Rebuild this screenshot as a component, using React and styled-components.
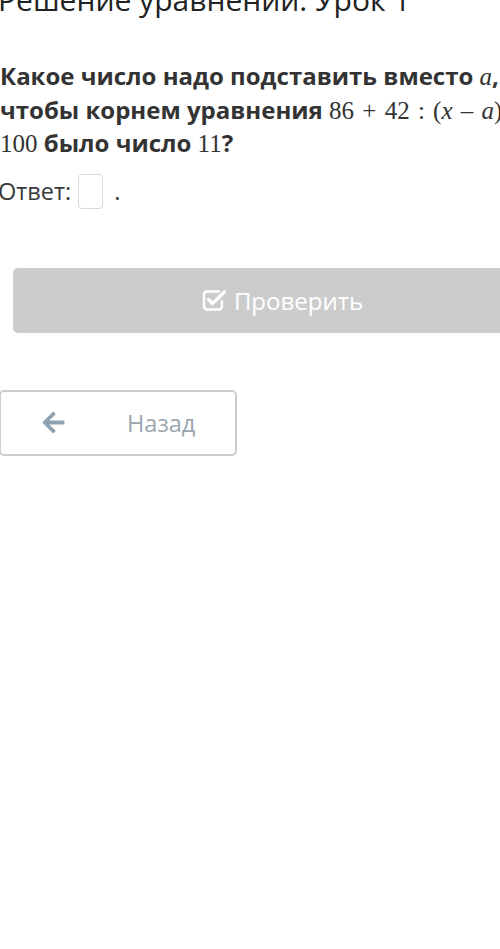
import React from 'react';
import styled, { createGlobalStyle } from 'styled-components';
import { FaArrowLeft } from 'react-icons/fa';

const GlobalStyle = createGlobalStyle`
    html, body {
        margin: 0;
        padding: 0;
        background: #fff;
        overflow: hidden;
    }
    body {
        font-family: "Open Sans", "Noto Sans", sans-serif;
        color: #333;
    }
`

const Page = styled.div`
    width: 500px;
    height: 949px;
    overflow: hidden;
    position: relative;
`

const Title = styled.h1`
    margin: -20px 0 0 -2px;
    font-size: 30px;
    font-weight: 400;
    line-height: 40px;
    color: #222;
    white-space: nowrap;
`

const Question = styled.p`
    width: 545px;
    margin: 40px 0 0 0;
    font-size: 24px;
    font-weight: 700;
    line-height: 32.5px;
    color: #333;
`

const Math = styled.span`
    font-family: "Liberation Serif", "DejaVu Serif", serif;
    font-weight: 400;
    font-size: 25px;
    word-spacing: 2px;
    font-style: ${p => (p.italic ? 'italic' : 'normal')};
`

const AnswerRow = styled.div`
    display: flex;
    align-items: center;
    gap: 7px;
    margin: 13px 0 0 -2px;
    font-size: 23.5px;
    color: #3a3a3a;
`

const AnswerBox = styled.input`
    width: 25px;
    height: 35px;
    box-sizing: border-box;
    border: 1px solid #d9d9d9;
    border-radius: 4px;
    padding: 0;
    background: #fff;
`

const Dot = styled.span`
    margin-left: 4px;
`

const CheckButton = styled.button`
    display: flex;
    align-items: center;
    justify-content: center;
    gap: 8px;
    width: 520px;
    height: 65px;
    margin: 59px 0 0 13px;
    padding: 0 0 0 19px;
    border: none;
    border-radius: 5px;
    background: #cccccc;
    color: #fff;
    font-family: "Open Sans", "Noto Sans", sans-serif;
    font-size: 24px;
    box-sizing: border-box;
`

const BackButton = styled.button`
    display: flex;
    align-items: center;
    width: 238px;
    height: 66px;
    margin: 57px 0 0 -1px;
    padding: 0 0 0 40px;
    box-sizing: border-box;
    border: 2px solid #cdcdcd;
    border-radius: 5px;
    background: #fff;
    font-family: "Open Sans", "Noto Sans", sans-serif;
    font-size: 23.5px;
    color: #9ba6ae;
    svg {
        width: 25px;
        height: 25px;
        color: #8ea2b2;
    }
`

const BackLabel = styled.span`
    margin-left: 61px;
`

const CheckSquareIcon = () => (
    <svg width="24" height="22" viewBox="0 0 24 22" fill="none">
        <path
            d="M17 2.5H5A3 3 0 0 0 2 5.5v12a3 3 0 0 0 3 3h12a3 3 0 0 0 3-3v-5"
            stroke="#fff"
            strokeWidth="2.4"
            strokeLinecap="round"
        />
        <path
            d="M6.5 10.5l4 4L22.5 3"
            stroke="#fff"
            strokeWidth="3.2"
            strokeLinecap="round"
            strokeLinejoin="round"
        />
    </svg>
);

export default function App() {
    return (
        <Page>
            <GlobalStyle />
            <Title>Решение уравнений. Урок 1</Title>
            <Question>
                Какое число надо подставить вместо <Math italic>a</Math>, чтобы корнем уравнения{' '}
                <Math>86 + 42 : (<Math italic>x</Math> – <Math italic>a</Math>) = 100</Math> было число <Math>11</Math>?
            </Question>
            <AnswerRow>
                Ответ:
                <AnswerBox />
                <Dot>.</Dot>
            </AnswerRow>
            <CheckButton>
                <CheckSquareIcon />
                Проверить
            </CheckButton>
            <BackButton>
                <FaArrowLeft />
                <BackLabel>Назад</BackLabel>
            </BackButton>
        </Page>
    );
}
